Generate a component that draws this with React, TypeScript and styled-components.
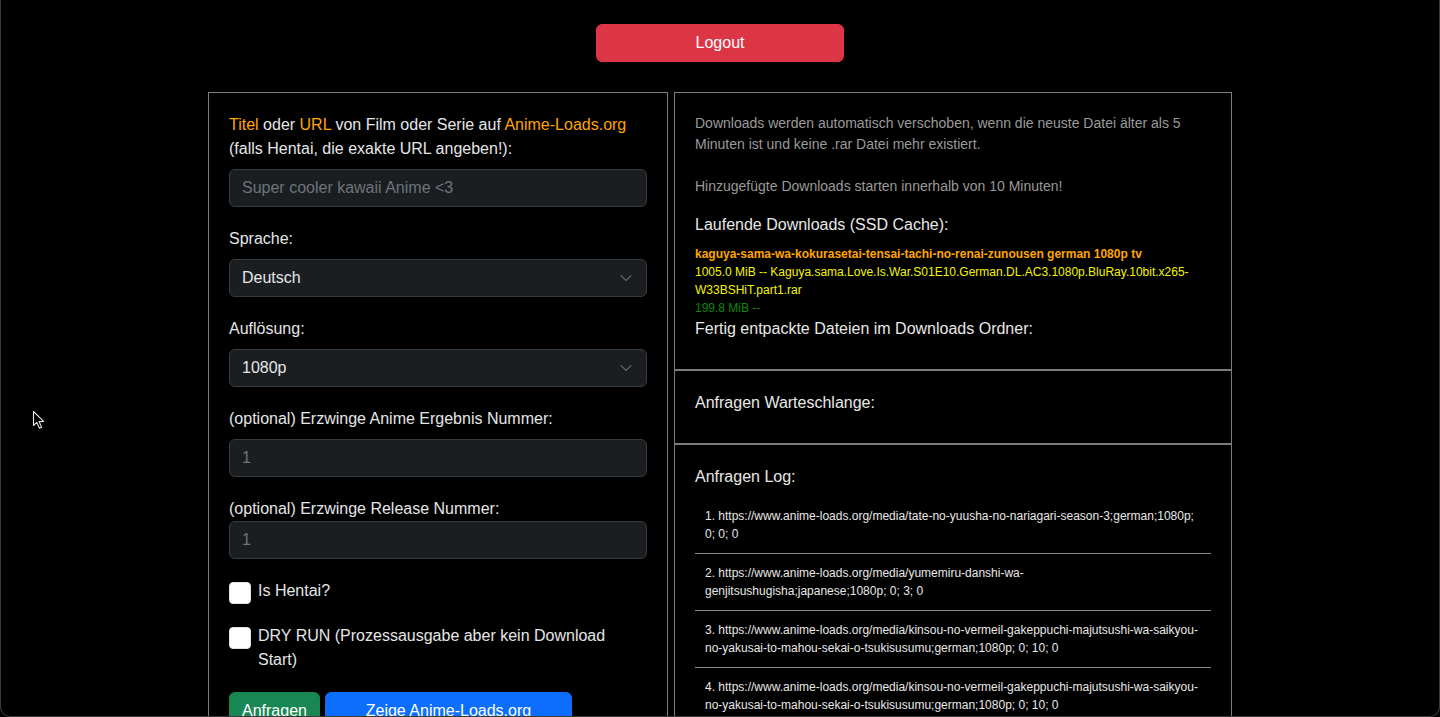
import styled, { createGlobalStyle } from 'styled-components'

const GlobalStyle = createGlobalStyle`
  html, body {
    margin: 0;
    padding: 0;
    background: #000;
  }

  body {
    font-family: "Liberation Sans", Arial, Helvetica, sans-serif;
    color: #dee2e6;
  }

  * {
    box-sizing: border-box;
  }
`

const StyledPage = styled.div`
  display: flex;
  flex-direction: column;
  align-items: center;
  padding-top: 24px;
  min-height: 100vh;
`

const StyledLogoutButton = styled.button`
  width: 248px;
  height: 38px;
  margin-bottom: 30px;
  font-family: inherit;
  font-size: 16px;
  color: #fff;
  background-color: #dc3545;
  border: 1px solid #dc3545;
  border-radius: 6px;
  cursor: pointer;
`

const StyledColumns = styled.div`
  display: grid;
  grid-template-columns: 460px 558px;
  gap: 6px;
  width: 1024px;
  align-items: start;
`

const StyledPanel = styled.section`
  border: 1px solid #7c7c7c;
  padding: 20px;
`

const StyledStack = styled.div`
  display: flex;
  flex-direction: column;
`

/* Left form */

const StyledLabel = styled.label<{ $flush?: boolean }>`
  display: block;
  font-size: 16px;
  line-height: 24px;
  color: #e4e6e8;
  margin-bottom: ${(p) => (p.$flush ? '0' : '8px')};
`

const StyledAccent = styled.span`
  color: #ffa500;
`

const StyledInput = styled.input`
  display: block;
  width: 100%;
  height: 38px;
  padding: 6px 12px;
  margin-bottom: 20px;
  font-family: inherit;
  font-size: 16px;
  line-height: 24px;
  color: #dee2e6;
  background-color: #1b1e21;
  border: 1px solid #363b40;
  border-radius: 6px;
  outline: none;

  &::placeholder {
    color: #6d747b;
  }
`

const StyledSelectWrap = styled.div`
  position: relative;
  margin-bottom: 20px;
`

const StyledSelect = styled.select`
  display: block;
  width: 100%;
  height: 38px;
  padding: 6px 36px 6px 12px;
  font-family: inherit;
  font-size: 16px;
  line-height: 24px;
  color: #e4e6e8;
  background-color: #1b1e21;
  border: 1px solid #363b40;
  border-radius: 6px;
  appearance: none;
  -webkit-appearance: none;
  outline: none;
`

const StyledChevron = styled.svg`
  position: absolute;
  right: 15px;
  top: 15px;
  width: 12px;
  height: 8px;
  pointer-events: none;
`

const StyledCheckRow = styled.label`
  display: flex;
  align-items: flex-start;
  gap: 7px;
  margin-bottom: 20px;
  font-size: 16px;
  line-height: 24px;
  color: #e4e6e8;
`

const StyledCheckbox = styled.input`
  flex: none;
  width: 22px;
  height: 22px;
  margin: 3px 0 0 0;
  appearance: none;
  -webkit-appearance: none;
  background: #fff;
  border: 1px solid #dee2e6;
  border-radius: 4px;
`

const StyledButtonRow = styled.div`
  display: flex;
  gap: 5px;
`

const StyledActionButton = styled.button<{ $variant: 'success' | 'primary'; $width?: number }>`
  height: 38px;
  padding: 6px 12px;
  width: ${(p) => (p.$width ? `${p.$width}px` : 'auto')};
  font-family: inherit;
  font-size: 16px;
  line-height: 24px;
  color: #fff;
  background-color: ${(p) => (p.$variant === 'success' ? '#198754' : '#0d6efd')};
  border: 1px solid ${(p) => (p.$variant === 'success' ? '#198754' : '#0d6efd')};
  border-radius: 6px;
  cursor: pointer;
`

/* Right side */

const StyledHint = styled.p`
  margin: 0 0 16px 0;
  font-size: 14px;
  line-height: 21px;
  color: #9a9a9a;
`

const StyledSectionTitle = styled.h3`
  margin: 0 0 8px 0;
  font-size: 16px;
  font-weight: 400;
  line-height: 24px;
  color: #e8e8e8;
`

const StyledStatusLine = styled.div<{ $tone: 'name' | 'file' | 'done' }>`
  font-size: 12px;
  font-weight: ${(p) => (p.$tone === 'name' ? 700 : 400)};
  line-height: 18px;
  color: ${(p) => (p.$tone === 'name' ? '#ffa500' : p.$tone === 'file' ? '#f5f500' : '#0a8a0a')};
`

const StyledLogList = styled.div`
  display: flex;
  flex-direction: column;
`

const StyledLogItem = styled.div`
  padding: 10px;
  font-size: 12px;
  line-height: 18px;
  color: #e8e8e8;
  border-bottom: 1px solid #8a8a8a;
`

/* Window chrome from the screenshot */

const StyledFrame = styled.div`
  position: fixed;
  inset: 0;
  border: 1px solid #3a3a3a;
  border-top: none;
  border-radius: 0 0 10px 10px;
  pointer-events: none;
`

const StyledCursor = styled.svg`
  position: fixed;
  left: 32px;
  top: 410px;
  width: 14px;
  height: 20px;
  pointer-events: none;
`

const Chevron = () => (
  <StyledChevron viewBox="0 0 12 8">
    <path d="M1 1.5 L6 6.5 L11 1.5" fill="none" stroke="#5d6166" strokeWidth="1.1" strokeLinecap="round" strokeLinejoin="round" />
  </StyledChevron>
)

const logEntries = [
  '1. https://www.anime-loads.org/media/tate-no-yuusha-no-nariagari-season-3;german;1080p; 0; 0; 0',
  '2. https://www.anime-loads.org/media/yumemiru-danshi-wa-genjitsushugisha;japanese;1080p; 0; 3; 0',
  '3. https://www.anime-loads.org/media/kinsou-no-vermeil-gakeppuchi-majutsushi-wa-saikyou-no-yakusai-to-mahou-sekai-o-tsukisusumu;german;1080p; 0; 10; 0',
  '4. https://www.anime-loads.org/media/kinsou-no-vermeil-gakeppuchi-majutsushi-wa-saikyou-no-yakusai-to-mahou-sekai-o-tsukisusumu;german;1080p; 0; 10; 0',
]

const App: React.FC = () => {
  return (
    <>
      <GlobalStyle />
      <StyledPage>
        <StyledLogoutButton>Logout</StyledLogoutButton>

        <StyledColumns>
          {/* Request form */}
          <StyledPanel>
            <StyledLabel>
              <StyledAccent>Titel</StyledAccent> oder <StyledAccent>URL</StyledAccent> von Film oder Serie auf{' '}
              <StyledAccent>Anime-Loads.org</StyledAccent>
              <br />
              (falls Hentai, die exakte URL angeben!):
            </StyledLabel>
            <StyledInput type="text" placeholder="Super cooler kawaii Anime <3" />

            <StyledLabel>Sprache:</StyledLabel>
            <StyledSelectWrap>
              <StyledSelect defaultValue="german">
                <option value="german">Deutsch</option>
                <option value="japanese">Japanisch</option>
              </StyledSelect>
              <Chevron />
            </StyledSelectWrap>

            <StyledLabel>Auflösung:</StyledLabel>
            <StyledSelectWrap>
              <StyledSelect defaultValue="1080p">
                <option value="1080p">1080p</option>
                <option value="720p">720p</option>
              </StyledSelect>
              <Chevron />
            </StyledSelectWrap>

            <StyledLabel>(optional) Erzwinge Anime Ergebnis Nummer:</StyledLabel>
            <StyledInput type="number" placeholder="1" />

            <StyledLabel $flush>(optional) Erzwinge Release Nummer:</StyledLabel>
            <StyledInput type="number" placeholder="1" />

            <StyledCheckRow>
              <StyledCheckbox type="checkbox" />
              <span>Is Hentai?</span>
            </StyledCheckRow>

            <StyledCheckRow>
              <StyledCheckbox type="checkbox" />
              <span>DRY RUN (Prozessausgabe aber kein Download Start)</span>
            </StyledCheckRow>

            <StyledButtonRow>
              <StyledActionButton $variant="success">Anfragen</StyledActionButton>
              <StyledActionButton $variant="primary" $width={247}>
                Zeige Anime-Loads.org
              </StyledActionButton>
            </StyledButtonRow>
          </StyledPanel>

          {/* Status side */}
          <StyledStack>
            <StyledPanel>
              <StyledHint>
                Downloads werden automatisch verschoben, wenn die neuste Datei älter als 5 Minuten ist und keine .rar
                Datei mehr existiert.
                <br />
                <br />
                Hinzugefügte Downloads starten innerhalb von 10 Minuten!
              </StyledHint>

              <StyledSectionTitle>Laufende Downloads (SSD Cache):</StyledSectionTitle>
              <StyledStatusLine $tone="name">
                kaguya-sama-wa-kokurasetai-tensai-tachi-no-renai-zunousen german 1080p tv
              </StyledStatusLine>
              <StyledStatusLine $tone="file">
                1005.0 MiB -- Kaguya.sama.Love.Is.War.S01E10.German.DL.AC3.1080p.BluRay.10bit.x265-W33BSHiT.part1.rar
              </StyledStatusLine>
              <StyledStatusLine $tone="done">199.8 MiB --</StyledStatusLine>

              <StyledSectionTitle>Fertig entpackte Dateien im Downloads Ordner:</StyledSectionTitle>
            </StyledPanel>

            <StyledPanel>
              <StyledSectionTitle>Anfragen Warteschlange:</StyledSectionTitle>
            </StyledPanel>

            <StyledPanel>
              <StyledSectionTitle>Anfragen Log:</StyledSectionTitle>
              <StyledLogList>
                {logEntries.map((entry) => (
                  <StyledLogItem key={entry}>{entry}</StyledLogItem>
                ))}
              </StyledLogList>
            </StyledPanel>
          </StyledStack>
        </StyledColumns>
      </StyledPage>

      <StyledFrame />
      <StyledCursor viewBox="0 0 14 20">
        <path
          d="M1.5 1.5 L1.5 15.5 L4.8 12.4 L7.4 18.2 L9.6 17.2 L7.1 11.6 L11.6 11.4 Z"
          fill="#000"
          stroke="#e6e6e6"
          strokeWidth="1.1"
          strokeLinejoin="round"
        />
      </StyledCursor>
    </>
  )
}

export default App
